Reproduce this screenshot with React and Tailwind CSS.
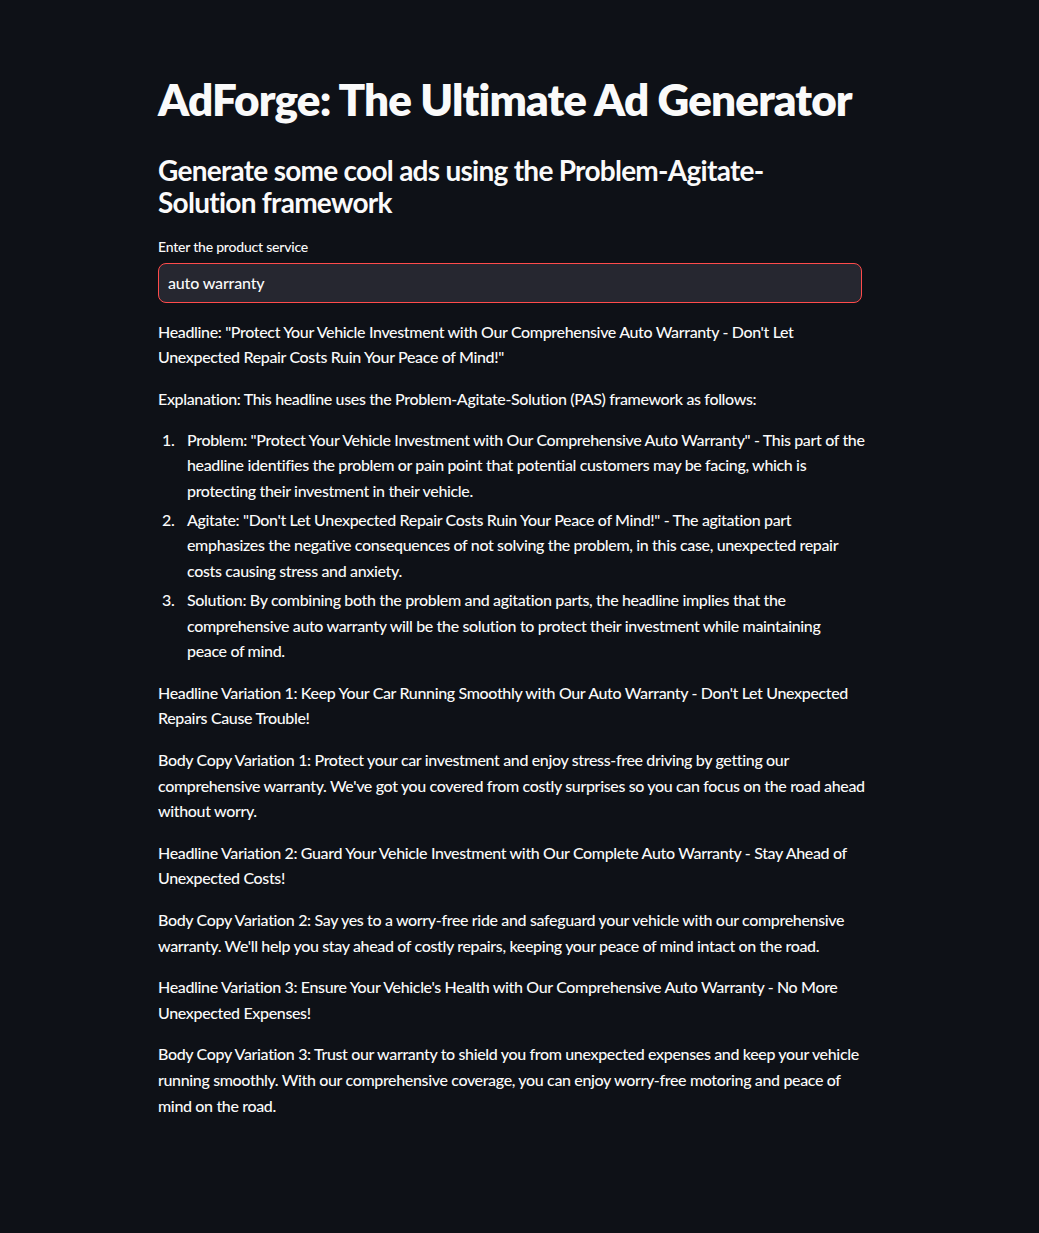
import React from "react";

const font = { fontFamily: "Lato, 'Noto Sans', sans-serif" };

function Lines({ lines, className = "" }) {
  return (
    <p className={"mb-4 leading-[25.6px] text-[16px] font-medium tracking-[-0.022em] " + className}>
      {lines.map((l, i) => (
        <span key={i} className="block whitespace-nowrap">
          {l}
        </span>
      ))}
    </p>
  );
}

function Item({ n, lines }) {
  return (
    <li className="my-[3.5px] flex text-[16px] font-medium leading-[25.6px] tracking-[-0.022em]">
      <span className="w-[29px] shrink-0 pl-[4px]">{n}.</span>
      <div>
        {lines.map((l, i) => (
          <span key={i} className="block whitespace-nowrap">
            {l}
          </span>
        ))}
      </div>
    </li>
  );
}

export default function App() {
  return (
    <div className="min-h-[1233px] w-full bg-[#0e1117] text-[#fafafa]" style={font}>
      <div className="ml-[158px] w-[704px] pt-[73px] pb-[100px]">
        <h1 className="text-[44px] font-extrabold leading-[1.2] tracking-[-0.02em] whitespace-nowrap">
          AdForge: The Ultimate Ad Generator
        </h1>
        <h2 className="mt-[28px] text-[28px] font-bold leading-[1.16] tracking-[-0.026em]">
          <span className="block whitespace-nowrap">Generate some cool ads using the Problem-Agitate-</span>
          <span className="block whitespace-nowrap">Solution framework</span>
        </h2>
        <label className="mt-[18px] block text-[14px] font-medium leading-[20px] tracking-[-0.015em]">
          Enter the product service
        </label>
        <div className="mt-[6px] flex h-[40px] items-center rounded-[8px] border border-[#ff4b4b] bg-[#262730] px-[9px] text-[16px] font-medium tracking-[-0.01em]">
          auto warranty
        </div>
        <div className="mt-[16px]">
          <Lines
            lines={[
              "Headline: \"Protect Your Vehicle Investment with Our Comprehensive Auto Warranty - Don't Let",
              "Unexpected Repair Costs Ruin Your Peace of Mind!\"",
            ]}
          />
          <Lines lines={["Explanation: This headline uses the Problem-Agitate-Solution (PAS) framework as follows:"]} />
          <ol className="mt-[-1px] mb-4">
            <Item
              n={1}
              lines={[
                "Problem: \"Protect Your Vehicle Investment with Our Comprehensive Auto Warranty\" - This part of the",
                "headline identifies the problem or pain point that potential customers may be facing, which is",
                "protecting their investment in their vehicle.",
              ]}
            />
            <Item
              n={2}
              lines={[
                "Agitate: \"Don't Let Unexpected Repair Costs Ruin Your Peace of Mind!\" - The agitation part",
                "emphasizes the negative consequences of not solving the problem, in this case, unexpected repair",
                "costs causing stress and anxiety.",
              ]}
            />
            <Item
              n={3}
              lines={[
                "Solution: By combining both the problem and agitation parts, the headline implies that the",
                "comprehensive auto warranty will be the solution to protect their investment while maintaining",
                "peace of mind.",
              ]}
            />
          </ol>
          <Lines
            lines={[
              "Headline Variation 1: Keep Your Car Running Smoothly with Our Auto Warranty - Don't Let Unexpected",
              "Repairs Cause Trouble!",
            ]}
          />
          <Lines
            lines={[
              "Body Copy Variation 1: Protect your car investment and enjoy stress-free driving by getting our",
              "comprehensive warranty. We've got you covered from costly surprises so you can focus on the road ahead",
              "without worry.",
            ]}
          />
          <Lines
            lines={[
              "Headline Variation 2: Guard Your Vehicle Investment with Our Complete Auto Warranty - Stay Ahead of",
              "Unexpected Costs!",
            ]}
          />
          <Lines
            lines={[
              "Body Copy Variation 2: Say yes to a worry-free ride and safeguard your vehicle with our comprehensive",
              "warranty. We'll help you stay ahead of costly repairs, keeping your peace of mind intact on the road.",
            ]}
          />
          <Lines
            lines={[
              "Headline Variation 3: Ensure Your Vehicle's Health with Our Comprehensive Auto Warranty - No More",
              "Unexpected Expenses!",
            ]}
          />
          <Lines
            lines={[
              "Body Copy Variation 3: Trust our warranty to shield you from unexpected expenses and keep your vehicle",
              "running smoothly. With our comprehensive coverage, you can enjoy worry-free motoring and peace of",
              "mind on the road.",
            ]}
          />
        </div>
      </div>
    </div>
  );
}
